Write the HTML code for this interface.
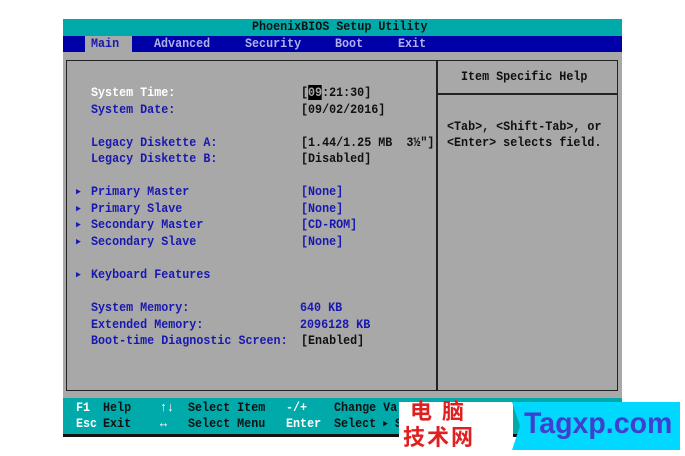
<!DOCTYPE html>
<html><head><meta charset="utf-8"><style>
body{margin:0;width:685px;height:456px;background:#fff;position:relative;overflow:hidden;font-family:"Liberation Mono",monospace;font-size:13px;font-weight:bold}
.a{position:absolute;white-space:pre;line-height:16px;transform:scaleX(0.9);transform-origin:0 50%}
.w{color:#fff}.b{color:#1818b0}.k{color:#101010}
.t{font-size:9px;vertical-align:1px}
</style></head><body>
<div style="position:absolute;left:63px;top:19px;width:559px;height:17px;background:#00aaaa"></div>
<div style="position:absolute;left:63px;top:36px;width:559px;height:16px;background:#0000a8"></div>
<div style="position:absolute;left:85px;top:36px;width:47px;height:16px;background:#a8a8a8"></div>
<div style="position:absolute;left:63px;top:52px;width:559px;height:346px;background:#a8a8a8"></div>
<div style="position:absolute;left:66px;top:60px;width:550px;height:329px;border:1.5px solid #222"></div>
<div style="position:absolute;left:436px;top:60px;width:1.5px;height:330px;background:#222"></div>
<div style="position:absolute;left:436px;top:93px;width:182px;height:1.5px;background:#222"></div>
<div style="position:absolute;left:63px;top:398px;width:559px;height:36px;background:#00aaaa"></div>
<div style="position:absolute;left:63px;top:434px;width:559px;height:3px;background:#111"></div>

<div class="a k" style="left:252px;top:19px">PhoenixBIOS Setup Utility</div>
<div class="a b" style="left:91px;top:36px">Main</div>
<div class="a" style="left:154px;top:36px;color:#b0b0f0">Advanced</div>
<div class="a" style="left:245px;top:36px;color:#b0b0f0">Security</div>
<div class="a" style="left:335px;top:36px;color:#b0b0f0">Boot</div>
<div class="a" style="left:398px;top:36px;color:#b0b0f0">Exit</div>

<div class="a w" style="left:91px;top:85px">System Time:</div>
<div class="a k" style="left:301px;top:85px">[<span style="background:#000;color:#a8a8a8">09</span>:21:30]</div>
<div class="a b" style="left:91px;top:102px">System Date:</div>
<div class="a k" style="left:301px;top:102px">[09/02/2016]</div>
<div class="a b" style="left:91px;top:135px">Legacy Diskette A:</div>
<div class="a k" style="left:301px;top:135px">[1.44/1.25 MB  3½"]</div>
<div class="a b" style="left:91px;top:151px">Legacy Diskette B:</div>
<div class="a k" style="left:301px;top:151px">[Disabled]</div>
<div class="a b" style="left:76px;top:184px"><span class="t">▶</span></div><div class="a b" style="left:91px;top:184px">Primary Master</div>
<div class="a b" style="left:301px;top:184px">[None]</div>
<div class="a b" style="left:76px;top:201px"><span class="t">▶</span></div><div class="a b" style="left:91px;top:201px">Primary Slave</div>
<div class="a b" style="left:301px;top:201px">[None]</div>
<div class="a b" style="left:76px;top:217px"><span class="t">▶</span></div><div class="a b" style="left:91px;top:217px">Secondary Master</div>
<div class="a b" style="left:301px;top:217px">[CD-ROM]</div>
<div class="a b" style="left:76px;top:234px"><span class="t">▶</span></div><div class="a b" style="left:91px;top:234px">Secondary Slave</div>
<div class="a b" style="left:301px;top:234px">[None]</div>
<div class="a b" style="left:76px;top:267px"><span class="t">▶</span></div><div class="a b" style="left:91px;top:267px">Keyboard Features</div>
<div class="a b" style="left:91px;top:300px">System Memory:</div>
<div class="a b" style="left:300px;top:300px">640 KB</div>
<div class="a b" style="left:91px;top:317px">Extended Memory:</div>
<div class="a b" style="left:300px;top:317px">2096128 KB</div>
<div class="a b" style="left:91px;top:333px">Boot-time Diagnostic Screen:</div>
<div class="a k" style="left:301px;top:333px">[Enabled]</div>

<div class="a k" style="left:461px;top:69px">Item Specific Help</div>
<div class="a k" style="left:447px;top:119px">&lt;Tab&gt;, &lt;Shift-Tab&gt;, or</div>
<div class="a k" style="left:447px;top:135px">&lt;Enter&gt; selects field.</div>

<div class="a w" style="left:76px;top:400px">F1</div><div class="a" style="left:103px;top:400px;color:#111">Help</div>
<div class="a w" style="left:160px;top:400px">↑↓</div><div class="a" style="left:188px;top:400px;color:#111">Select Item</div>
<div class="a w" style="left:286px;top:400px">-/+</div><div class="a" style="left:334px;top:400px;color:#111">Change Va</div>
<div class="a w" style="left:76px;top:416px">Esc</div><div class="a" style="left:103px;top:416px;color:#111">Exit</div>
<div class="a w" style="left:160px;top:416px">↔</div><div class="a" style="left:188px;top:416px;color:#111">Select Menu</div>
<div class="a w" style="left:286px;top:416px">Enter</div><div class="a" style="left:334px;top:416px;color:#111">Select <span class="t">▶</span> S</div>

<div style="position:absolute;left:399px;top:402px;width:114px;height:48px;background:#fff"></div>
<svg style="position:absolute;left:512px;top:402px" width="168" height="48"><polygon points="0,0 168,0 168,48 0,48 8,24" fill="#00d8ff"/></svg>
<div style="position:absolute;white-space:pre;left:410px;top:398px;font-family:'Noto Sans CJK SC',sans-serif;font-size:22px;line-height:24px;color:#e02020;letter-spacing:10px">电脑</div>
<div style="position:absolute;white-space:pre;left:403px;top:424px;font-family:'Noto Sans CJK SC',sans-serif;font-size:22px;line-height:24px;color:#e02020;letter-spacing:2px">技术网</div>
<div style="position:absolute;white-space:pre;left:524px;top:406px;font-family:'Liberation Sans',sans-serif;font-size:30px;line-height:36px;color:#4040d0;transform:scaleX(0.95);transform-origin:0 50%">Tagxp.com</div>
</body></html>
